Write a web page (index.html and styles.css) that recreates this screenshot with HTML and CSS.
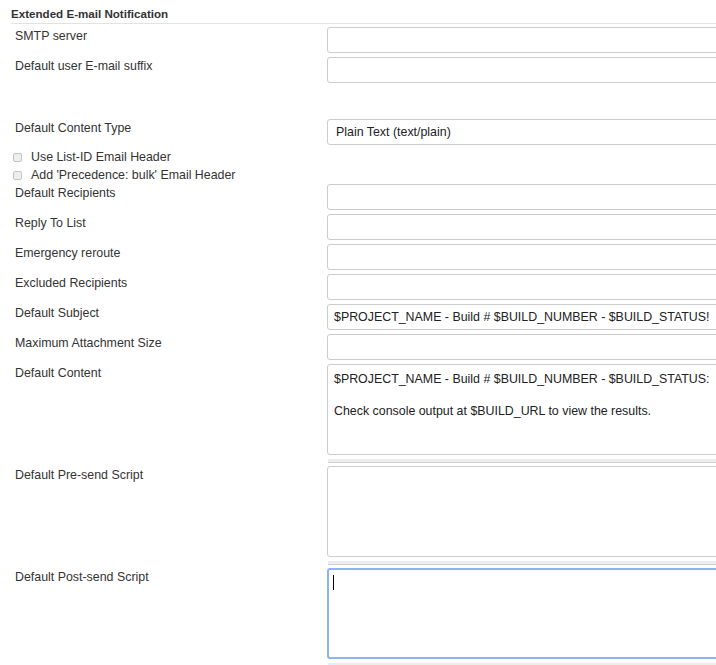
FILE: index.html
```html
<!DOCTYPE html>
<html lang="en">
<head>
    <meta charset="UTF-8">
    <meta name="viewport" content="width=device-width, initial-scale=1.0">
    <title>Configure System - Extended E-mail Notification</title>
    <link rel="stylesheet" href="styles.css">
</head>
<body>
    <div class="section">
        <div class="section-header">Extended E-mail Notification</div>

        <div class="row">
            <div class="label">SMTP server</div>
            <div class="field"><input type="text" class="text-box"></div>
        </div>
        <div class="row">
            <div class="label">Default user E-mail suffix</div>
            <div class="field"><input type="text" class="text-box"></div>
        </div>

        <div class="spacer"></div>

        <div class="row row-select">
            <div class="label">Default Content Type</div>
            <div class="field">
                <select class="text-box select-box">
                    <option>Plain Text (text/plain)</option>
                    <option>HTML (text/html)</option>
                </select>
            </div>
        </div>

        <label class="check-row"><input type="checkbox" class="check"> Use List-ID Email Header</label>
        <label class="check-row"><input type="checkbox" class="check"> Add 'Precedence: bulk' Email Header</label>

        <div class="row">
            <div class="label">Default Recipients</div>
            <div class="field"><input type="text" class="text-box"></div>
        </div>
        <div class="row">
            <div class="label">Reply To List</div>
            <div class="field"><input type="text" class="text-box"></div>
        </div>
        <div class="row">
            <div class="label">Emergency reroute</div>
            <div class="field"><input type="text" class="text-box"></div>
        </div>
        <div class="row">
            <div class="label">Excluded Recipients</div>
            <div class="field"><input type="text" class="text-box"></div>
        </div>
        <div class="row">
            <div class="label">Default Subject</div>
            <div class="field"><input type="text" class="text-box" value="$PROJECT_NAME - Build # $BUILD_NUMBER - $BUILD_STATUS!"></div>
        </div>
        <div class="row">
            <div class="label">Maximum Attachment Size</div>
            <div class="field"><input type="text" class="text-box"></div>
        </div>

        <div class="row row-area">
            <div class="label">Default Content</div>
            <div class="field">
                <textarea class="text-area">$PROJECT_NAME - Build # $BUILD_NUMBER - $BUILD_STATUS:

Check console output at $BUILD_URL to view the results.</textarea>
                <div class="area-handle"></div>
            </div>
        </div>
        <div class="row row-area">
            <div class="label">Default Pre-send Script</div>
            <div class="field">
                <textarea class="text-area"></textarea>
                <div class="area-handle"></div>
            </div>
        </div>
        <div class="row row-area">
            <div class="label">Default Post-send Script</div>
            <div class="field field-focus">
                <textarea class="text-area focused" id="post-send"></textarea>
                <span class="caret"></span>
                <div class="area-handle"></div>
            </div>
        </div>
    </div>

    <script>
        document.getElementById("post-send").focus();
    </script>
</body>
</html>
```

FILE: styles.css
```css
html, body {
    margin: 0;
    overflow: hidden;
}
body {
    font-family: "Liberation Sans", Arial, sans-serif;
    font-size: 12.4px;
    color: #333;
    background: #fff;
}
.section {
    padding-left: 11px;
    width: 900px;
}
.section-header {
    font-weight: bold;
    font-size: 11.6px;
    color: #333;
    padding-top: 7px;
    height: 16px;
    border-bottom: 1px solid #e2e2e2;
    margin-bottom: 3px;
}
.row {
    display: flex;
    margin-bottom: 4px;
}
.label {
    width: 312px;
    padding-left: 4px;
    padding-top: 2px;
    line-height: 15px;
    flex-shrink: 0;
}
.field {
    flex: 1;
}
.text-box {
    display: block;
    box-sizing: border-box;
    width: 100%;
    height: 26px;
    margin: 0;
    padding: 0 6px;
    border: 1px solid #ccc;
    border-radius: 3px;
    font-family: "Liberation Sans", Arial, sans-serif;
    font-size: 12.4px;
    color: #222;
    background: #fff;
    outline: none;
}
.select-box {
    -webkit-appearance: none;
    appearance: none;
    padding-left: 8px;
}
.spacer {
    height: 32px;
}
.row-select {
    margin-bottom: 3px;
}
.check-row {
    display: flex;
    align-items: center;
    height: 18px;
    padding-left: 2px;
    line-height: 15px;
}
.check {
    -webkit-appearance: none;
    appearance: none;
    width: 9px;
    height: 9px;
    margin: 0 9px 0 0;
    border: 1px solid #c4c4c4;
    border-radius: 2px;
    background: #eee;
}
.row-area {
    margin-bottom: 3px;
}
.text-area {
    display: block;
    box-sizing: border-box;
    width: 100%;
    height: 91px;
    margin: 0;
    padding: 6px 6px 4px;
    border: 1px solid #ccc;
    border-radius: 3px;
    font-family: "Liberation Sans", Arial, sans-serif;
    font-size: 12.4px;
    line-height: 16px;
    color: #222;
    resize: none;
    outline: none;
    caret-color: transparent;
}
.text-area.focused:focus {
    border: 2px solid #8db3f0;
    padding: 5px 5px 3px;
}
.field-focus {
    position: relative;
}
.caret {
    position: absolute;
    left: 6px;
    top: 7px;
    width: 1px;
    height: 15px;
    background: #000;
}
.area-handle {
    height: 3px;
    margin-top: 4px;
    margin-left: 1px;
    background: #ededed;
    border-bottom: 1px solid #cfcfcf;
}
```
